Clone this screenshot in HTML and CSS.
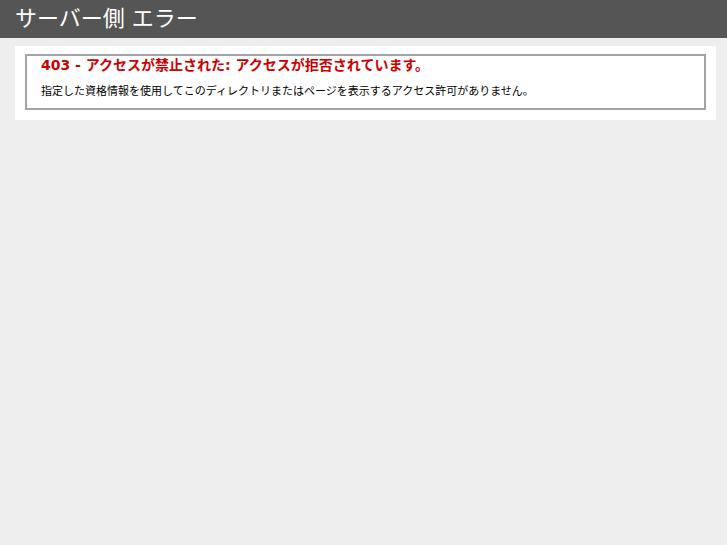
FILE: index.html
```html
<!DOCTYPE html>
<html lang="ja">
<head>
<meta charset="utf-8">
<title>403 - アクセスが禁止された</title>
<link rel="stylesheet" href="styles.css">
</head>
<body>
	<div id="header"><h1>サーバー側 エラー</h1></div>
	<div id="content">
		<div class="content-container">
			<fieldset>
				<h2>403 - アクセスが禁止された: アクセスが拒否されています。</h2>
				<h3>指定した資格情報を使用してこのディレクトリまたはページを表示するアクセス許可がありません。</h3>
			</fieldset>
		</div>
	</div>
</body>
</html>
```

FILE: styles.css
```css
body {margin:0; font-size:11px; font-family:"DejaVu Sans", "Noto Sans CJK JP", sans-serif; background:#EEEEEE;}
fieldset {padding:0 14px 10px 14px; margin:0; border:2px solid #a3a3a3;}
h1 {font-size:22px; line-height:26px; margin:0; font-weight:normal; color:#FFF;}
h2 {font-size:14px; line-height:18px; margin:0; color:#CC0000;}
h3 {font-size:11px; line-height:13px; margin:11px 0 0 0; font-weight:normal; color:#000000;}

#header {padding:6px 15px; background-color:#555555; color:#FFF;}
#content {margin:0 0 0 15px;}
.content-container {background:#FFF; width:681px; margin-top:8px; padding:8px 10px 10px 10px;}
```
